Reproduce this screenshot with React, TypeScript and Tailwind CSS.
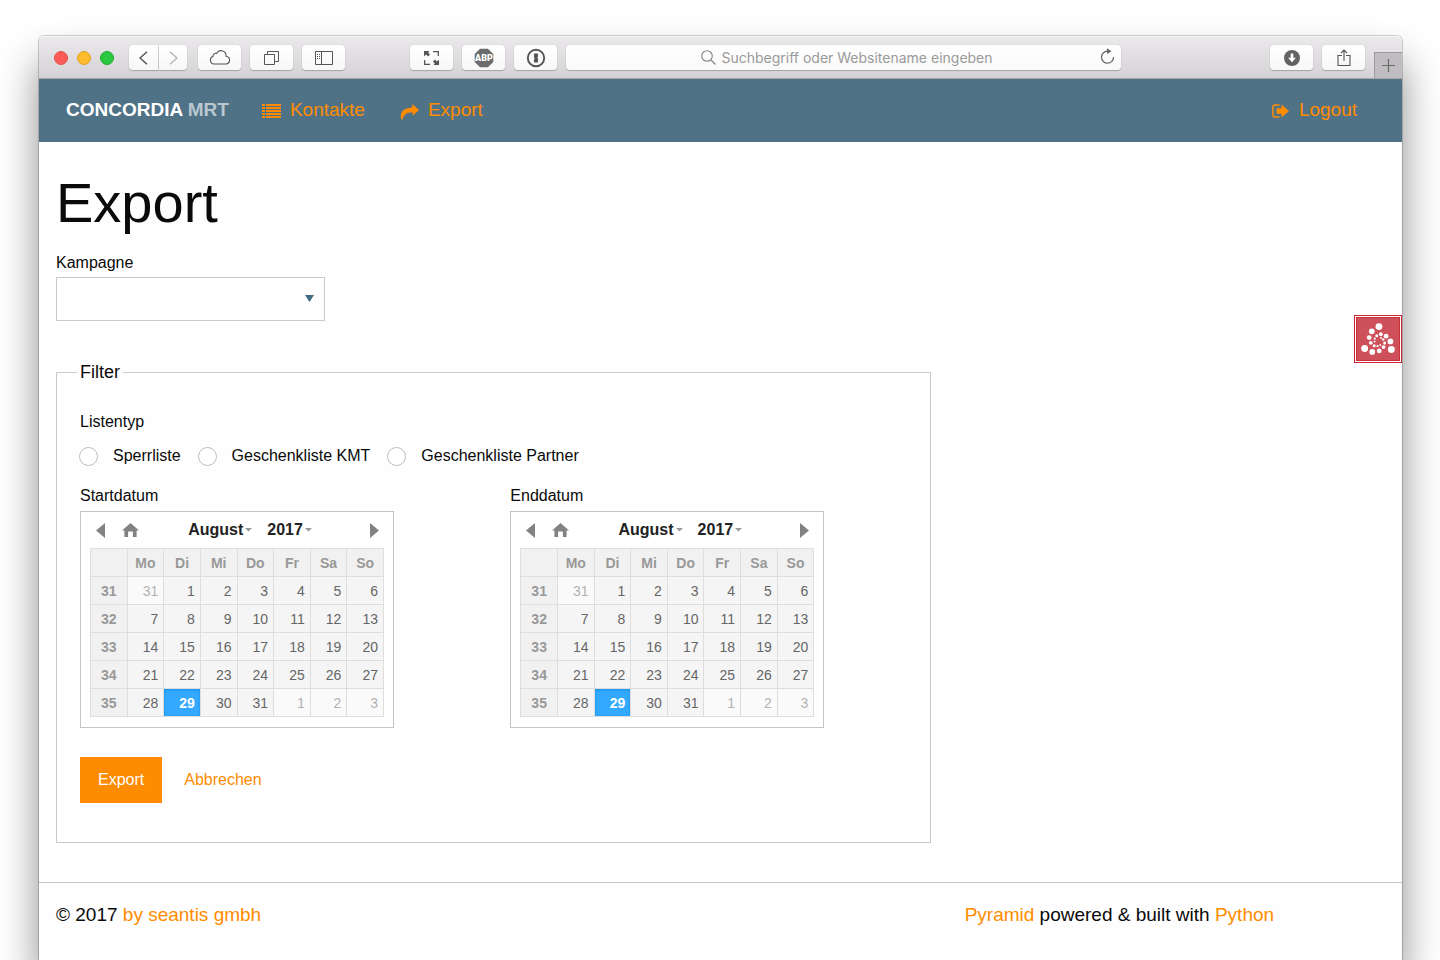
import type { ReactNode } from "react";

const weekdays = ["Mo", "Di", "Mi", "Do", "Fr", "Sa", "So"];

const weeks = [
  { week: 31, days: [31, 1, 2, 3, 4, 5, 6] },
  { week: 32, days: [7, 8, 9, 10, 11, 12, 13] },
  { week: 33, days: [14, 15, 16, 17, 18, 19, 20] },
  { week: 34, days: [21, 22, 23, 24, 25, 26, 27] },
  { week: 35, days: [28, 29, 30, 31, 1, 2, 3] },
];

function ToolButton({ label, className = "w-[43px] rounded", children }: { label: string; className?: string; children: ReactNode }) {
  return (
    <button
      type="button"
      aria-label={label}
      className={`flex h-[25px] shrink-0 items-center justify-center bg-linear-to-b from-white to-[#f7f7f7] text-[#555] shadow-[0_1px_1px_rgba(0,0,0,0.22),0_0_1px_rgba(0,0,0,0.2)] ${className}`}
    >
      {children}
    </button>
  );
}

function Toolbar() {
  return (
    <div className="flex h-[43px] items-center rounded-t-[5px] border-t border-b border-t-[#f8f7f8] border-b-[#a9a7a9] bg-linear-to-b from-[#ebe9eb] to-[#d4d2d4] pl-[15px]">
      <div className="flex shrink-0 gap-[9px]">
        <span className="size-[14px] rounded-full border border-[#e2504a] bg-[#fc5b57]" />
        <span className="size-[14px] rounded-full border border-[#dfa023] bg-[#fdbc2e]" />
        <span className="size-[14px] rounded-full border border-[#1fac2f] bg-[#28c840]" />
      </div>
      <div className="ml-[15px] flex shrink-0 gap-px">
        <ToolButton label="Zurück" className="w-[29px] rounded-l">
          <svg width="10" height="14" viewBox="0 0 10 14" fill="none" stroke="currentColor" strokeWidth="1.5"><path d="M8 .7 1 7l7 6.300" /></svg>
        </ToolButton>
        <ToolButton label="Vorwärts" className="w-[28px] rounded-r">
          <svg width="10" height="14" viewBox="0 0 10 14" fill="none" stroke="#b5b5b5" strokeWidth="1.5"><path d="m2 .7 7 6.300-7 6.300" /></svg>
        </ToolButton>
      </div>
      <div className="ml-[11px] flex shrink-0 gap-[9px]">
        <ToolButton label="iCloud-Tabs">
          <svg width="22" height="15" viewBox="0 0 22 15" fill="none" stroke="currentColor" strokeWidth="1.1">
            <path d="M5 14a3.800 3.800 0 0 1-1-7.400A2.900 2.900 0 0 1 7.600 3.400 5 5 0 0 1 17 6.300 3.900 3.900 0 0 1 17.500 14Z" />
          </svg>
        </ToolButton>
        <ToolButton label="Alle Tabs">
          <svg width="15" height="14" viewBox="0 0 15 14" fill="none" stroke="currentColor"><path d="M.5 3.500h10v10H.5Z" /><path d="M3.500 3.500v-3h11v10h-4" /></svg>
        </ToolButton>
        <ToolButton label="Seitenleiste">
          <svg width="18" height="14" viewBox="0 0 18 14" fill="none" stroke="currentColor"><path d="M.5.5h17v13H.5ZM6.500.5v13" /><path d="M2 3.500h3M2 5.500h3M2 7.500h3" strokeDasharray="1 1" /></svg>
        </ToolButton>
      </div>
      <div className="ml-[65px] flex shrink-0 gap-[9px]">
        <ToolButton label="Fenstergröße">
          <svg width="15" height="14" viewBox="0 0 15 14" fill="none" stroke="currentColor">
            <path d="M9 .7h5.300v4.300M.7 9v4.300H6" strokeWidth="1.300" />
            <path d="M0 0h5.500L4.200 1.600 6 3.600 4 5.400 2.200 3.400 0 5.200ZM15 14H9.500l1.300-1.600L9 10.400l2-1.800 1.800 2L15 8.800Z" fill="currentColor" stroke="none" />
          </svg>
        </ToolButton>
        <ToolButton label="Adblock Plus">
          <svg width="20" height="20" viewBox="0 0 20 20">
            <path d="M6.100.7h7.800l5.400 5.400v7.800l-5.400 5.400H6.100L.7 13.900V6.100Z" fill="#6c6c6c" />
            <text x="10" y="13" textAnchor="middle" fill="#fff" className="font-['Roboto',Arial,sans-serif] text-[9px] font-black">ABP</text>
          </svg>
        </ToolButton>
        <ToolButton label="1Password">
          <svg width="20" height="20" viewBox="0 0 20 20">
            <circle cx="10" cy="10" r="8.200" fill="none" stroke="#555" strokeWidth="1.900" />
            <path d="M8 5.400h4v3.300l-.8.800.8.800v4.300H8v-3.300l.8-.8-.8-.8Z" fill="#555" />
          </svg>
        </ToolButton>
      </div>
      <div className="relative ml-[9px] flex h-[25px] min-w-0 flex-1 items-center justify-center rounded bg-linear-to-b from-white to-[#f9f9f9] pl-[7px] shadow-[0_1px_1px_rgba(0,0,0,0.22),0_0_1px_rgba(0,0,0,0.2)]">
        <svg className="mr-[5px] shrink-0" width="15" height="15" viewBox="0 0 15 15" fill="none" stroke="#858585" strokeWidth="1.100"><circle cx="6" cy="6" r="5.300" /><path d="m10 10 4.500 4.500" /></svg>
        <input
          type="text"
          aria-label="Adresse"
          placeholder="Suchbegriff oder Websitename eingeben"
          className="field-sizing-content min-w-0 bg-transparent font-['Inter',sans-serif] text-sm text-[#555] outline-none placeholder:text-[#9a9a9a]"
        />
        <button type="button" aria-label="Neu laden" className="absolute top-[3px] right-[6px]">
          <svg width="15" height="17" viewBox="0 0 15 17" fill="none" stroke="#666" strokeWidth="1.200"><path d="M8 3.200H7.500A6 6 0 1 0 13.500 9" /><path d="M7 .3 11.500 3.200 7 6.100Z" fill="#666" stroke="none" /></svg>
        </button>
      </div>
      <div className="ml-[149px] flex shrink-0 gap-[9px]">
        <ToolButton label="Downloads">
          <svg width="16" height="16" viewBox="0 0 16 16"><circle cx="8" cy="8" r="8" fill="#636363" /><path d="M6.700 3.500h2.600v4.300h2.600L8 12.300 4.100 7.800h2.600Z" fill="#fff" /></svg>
        </ToolButton>
        <ToolButton label="Teilen">
          <svg width="14" height="18" viewBox="0 0 14 18" fill="none" stroke="currentColor"><path d="M5 6.500H1v10h12v-10H9M7 12V1M4 4l3-3 3 3" strokeWidth="1.100" /></svg>
        </ToolButton>
      </div>
      <button type="button" aria-label="Neuer Tab" className="ml-[9px] flex h-[26px] w-[28px] shrink-0 items-center justify-center self-end border-t border-l border-[#9b999b] bg-[#bfbdbf]">
        <svg width="13" height="13" viewBox="0 0 13 13" stroke="#6a6a6a" strokeWidth="1.200"><path d="M6.500 0v13M0 6.500h13" /></svg>
      </button>
    </div>
  );
}

function NavBar() {
  return (
    <nav className="flex h-[63px] items-center bg-[#507287] pr-[45px] pb-[2px] pl-[27px] text-[19px] leading-6 text-[#ff8c00]">
      <a href="#start" className="font-bold text-white">
        CONCORDIA <span className="text-[#b9c7cf]">MRT</span>
      </a>
      <a href="#kontakte" className="ml-[33px] flex items-center gap-[9px]">
        <svg width="19" height="14" viewBox="0 0 19 14" fill="currentColor" className="mt-[3px]">
          <path d="M0 0h3v2H0ZM4 0h15v2H4ZM0 3h3v2H0ZM4 3h15v2H4ZM0 6h3v2H0ZM4 6h15v2H4ZM0 9h3v2H0ZM4 9h15v2H4ZM0 12h3v2H0ZM4 12h15v2H4Z" />
        </svg>
        Kontakte
      </a>
      <a href="#export" className="ml-[35px] flex items-center gap-[9px]">
        <svg width="19" height="17" viewBox="0 0 19 17" fill="currentColor" className="mt-[3px]">
          <path d="M12.300 1 19 7l-6.200 5.800V9.500C7.500 9.200 4.200 10.500 2.500 16.500H1.200C-.6 9.500 3.500 4.600 12.300 4.400Z" />
        </svg>
        Export
      </a>
      <a href="#logout" className="ml-auto flex items-center gap-[10px]">
        <svg width="17" height="14" viewBox="0 0 17 14" fill="currentColor" className="mt-[3px]">
          <path d="M9.500.5 17 7l-7.500 6.500V9.800H4.600V4.200h4.900Z" />
          <path d="M7.500 1H3.200Q.9 1 .9 3.300v7.400Q.9 13 3.200 13h4.300" fill="none" stroke="currentColor" strokeWidth="1.500" />
        </svg>
        Logout
      </a>
    </nav>
  );
}

function Caret() {
  return <svg width="7" height="4" viewBox="0 0 7 4" fill="#999"><path d="M0 0h7L3.500 3.500Z" /></svg>;
}

function Calendar({ label, id }: { label: string; id: string }) {
  return (
    <div>
      <div id={id} className="mb-[3px] leading-6">{label}</div>
      <div role="group" aria-labelledby={id} className="w-[314px] max-w-full border border-[#c4c4c4] bg-white px-[9px] pb-[10px]">
        <div className="flex h-9 items-center justify-between pr-[5px] pl-[6px] text-[#828282]">
          <div className="flex items-center gap-[17px]">
            <button type="button" aria-label="Vorheriger Monat">
              <svg width="9" height="15" viewBox="0 0 9 15" fill="currentColor"><path d="M9 0v15L0 7.500Z" /></svg>
            </button>
            <button type="button" aria-label="Heute">
              <svg width="17" height="14" viewBox="0 0 17 14" fill="currentColor"><path d="M8.500 0 17 7.500h-2.400V14h-3.700V8.500H6.100V14H2.400V7.500H0Z" /></svg>
            </button>
          </div>
          <div className="flex gap-[15px] font-bold text-[#222]">
            <button type="button" className="flex items-center gap-[2px]">August<Caret /></button>
            <button type="button" className="flex items-center gap-[2px]">2017<Caret /></button>
          </div>
          <button type="button" aria-label="Nächster Monat" className="ml-[9px]">
            <svg width="9" height="15" viewBox="0 0 9 15" fill="currentColor"><path d="M0 0v15l9-7.500Z" /></svg>
          </button>
        </div>
        <table className="w-full table-fixed border-collapse text-sm leading-none text-[#666]">
          <thead>
            <tr className="h-7">
              <th className="border border-[#ddd] bg-[#f1f1f1]" />
              {weekdays.map((day) => (
                <th key={day} scope="col" className="border border-[#ddd] bg-[#f1f1f1] font-bold text-[#999]">{day}</th>
              ))}
            </tr>
          </thead>
          <tbody>
            {weeks.map(({ week, days }) => (
              <tr key={week} className="h-7">
                <th scope="row" className="border border-[#ddd] bg-[#f1f1f1] font-bold text-[#999]">{week}</th>
                {days.map((day, i) => {
                  const outside = (week === 31 && day > 7) || (week === 35 && day < 7);
                  const selected = day === 29;
                  const tone = selected
                    ? "bg-[#33aaff] font-bold text-white shadow-[inset_0_1px_3px_#178fe5]"
                    : outside
                      ? "bg-[#fafafa] text-[#b2b2b2]"
                      : "bg-[#f5f5f5]";
                  return (
                    <td key={i} className={`border border-[#ddd] text-right ${tone}`}>
                      <button type="button" className="w-full pr-[5px] text-right">{day}</button>
                    </td>
                  );
                })}
              </tr>
            ))}
          </tbody>
        </table>
      </div>
    </div>
  );
}

function DebugBadge() {
  return (
    <button type="button" aria-label="Debug Toolbar" className="absolute top-[173px] right-0 size-12 border border-[#cf2430] bg-white p-px">
      <svg viewBox="0 0 44 44" className="size-full border border-[#cb2f3a] bg-[#cd505a]" fill="#fff">
        <circle cx="23" cy="9" r="3.600" />
        <circle cx="15.500" cy="14" r="3" />
        <circle cx="12.800" cy="20.500" r="2.500" />
        <circle cx="14.500" cy="26" r="2" />
        <circle cx="18" cy="29" r="1.600" />
        <circle cx="21.500" cy="29.500" r="1.200" />
        <circle cx="24.300" cy="28.300" r="1" />
        <circle cx="8" cy="32" r="3.600" />
        <circle cx="16" cy="35.500" r="3" />
        <circle cx="23.300" cy="34.500" r="2.500" />
        <circle cx="27.800" cy="30.500" r="2" />
        <circle cx="29" cy="26.300" r="1.600" />
        <circle cx="27.500" cy="22.500" r="1.300" />
        <circle cx="25.200" cy="21" r="1" />
        <circle cx="36" cy="33" r="3.600" />
        <circle cx="35" cy="24.500" r="3" />
        <circle cx="30.500" cy="19" r="2.500" />
        <circle cx="25" cy="17" r="2" />
        <circle cx="20.700" cy="18.500" r="1.600" />
        <circle cx="18.600" cy="21.500" r="1.200" />
        <circle cx="18.500" cy="24.500" r="1" />
      </svg>
    </button>
  );
}

export default function App() {
  return (
    <div className="flex min-h-screen flex-col overflow-hidden bg-white pt-9 pr-[38px] pl-[39px] font-['Liberation_Sans',Arial,sans-serif] text-base text-[#0a0a0a]">
      <div className="flex flex-1 flex-col rounded-t-[5px] bg-[#fefefe] shadow-[0_0_0_1px_rgba(0,0,0,0.18),0_26px_40px_rgba(0,0,0,0.46)]">
        <Toolbar />
        <NavBar />
        <div className="relative flex-1">
          <main className="w-2/3 px-[17px] pt-[29px] pb-[39px]">
            <h1 className="mb-4 text-[56px] leading-16">Export</h1>
            <div className="grid grid-cols-3 gap-[34px]">
              <div>
                <label htmlFor="kampagne" className="mb-[2px] block leading-6">Kampagne</label>
                <div className="relative">
                  <select id="kampagne" className="block h-11 w-full appearance-none border border-[#cacaca] bg-[#fefefe] px-2" defaultValue="">
                    <option value="" />
                  </select>
                  <svg className="pointer-events-none absolute top-[18px] right-[11px]" width="9" height="7" viewBox="0 0 9 7" fill="#3f6b85"><path d="M0 0h9L4.500 7Z" /></svg>
                </div>
              </div>
            </div>
            <fieldset className="mt-[38px] border border-[#cacaca] px-[23px] pt-6 pb-[39px]">
              <legend className="-ml-[3px] px-[3px] text-lg leading-[27px]">Filter</legend>
              <div id="listentyp" className="leading-6">Listentyp</div>
              <div role="radiogroup" aria-labelledby="listentyp" className="mt-[10px] -ml-px flex gap-[17px] leading-6">
                {["Sperrliste", "Geschenkliste KMT", "Geschenkliste Partner"].map((name) => (
                  <label key={name} className="flex items-center gap-[15px]">
                    <input type="radio" name="listentyp" className="size-[19px] appearance-none rounded-full border border-[#bdbdbd] bg-white checked:border-[6px] checked:border-[#507287]" />
                    {name}
                  </label>
                ))}
              </div>
              <div className="mt-4 grid grid-cols-2 gap-[34px]">
                <Calendar id="startdatum" label="Startdatum" />
                <Calendar id="enddatum" label="Enddatum" />
              </div>
              <div className="mt-[29px] flex items-center gap-[22px]">
                <button type="submit" className="h-[46px] bg-[#ff8c00] px-[18px] text-[#fefefe]">Export</button>
                <a href="#abbrechen" className="text-[#ff8c00]">Abbrechen</a>
              </div>
            </fieldset>
          </main>
          <DebugBadge />
          <footer className="grid grid-cols-3 border-t border-[#c6c6c6] pt-5 pb-[33px] text-[19px] leading-6">
            <p className="col-span-2 px-[17px]">© 2017 <a href="#seantis" className="text-[#ff8c00]">by seantis gmbh</a></p>
            <p className="px-[17px] whitespace-nowrap">
              <a href="#pyramid" className="text-[#ff8c00]">Pyramid</a> powered &amp; built with <a href="#python" className="text-[#ff8c00]">Python</a>
            </p>
          </footer>
        </div>
      </div>
    </div>
  );
}
